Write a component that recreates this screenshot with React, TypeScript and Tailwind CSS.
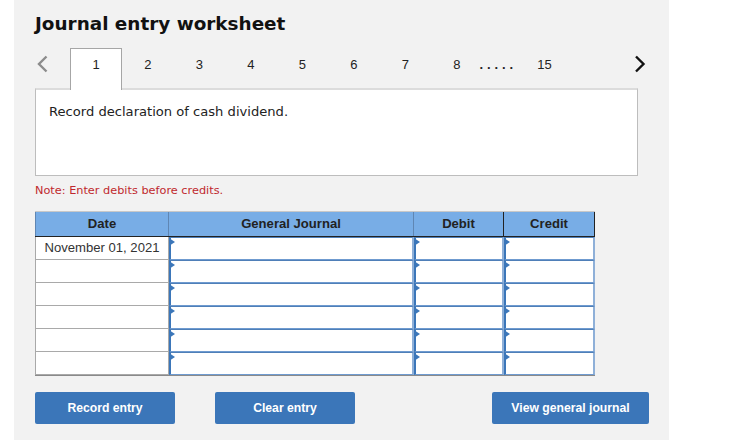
import React from "react";

const tabs = ["2", "3", "4", "5", "6", "7", "8"];
const rows = ["November 01, 2021", "", "", "", "", ""];

const Cell = ({ width }: { width: string }) => (
  <div
    className={`relative h-full border-2 border-y-[1.5px] border-t-[#4f7fb8] border-r-[#8fb0d8] border-b-[#6f9bd0] border-l-[#3b76b9] bg-white ${width}`}
  >
    <span className="absolute left-[-2px] top-0 h-0 w-0 border-y-[4px] border-l-[6px] border-y-transparent border-l-[#3b76b9]" />
  </div>
);

const App = () => {
  return (
    <div className="h-[440px] w-[732px] overflow-hidden bg-white font-['Liberation_Sans',sans-serif]">
      <div className="ml-[14px] h-[440px] w-[655px] bg-[#f2f2f2] px-[21px]">
        <h1 className="pt-[12px] text-[18.4px] leading-[23px] font-bold text-[#111] font-['DejaVu_Sans',sans-serif]">
          Journal entry worksheet
        </h1>

        <div className="mt-[13px] flex h-[42px] items-start">
          <div className="flex h-[32px] w-[35px] items-center pl-[1px]">
            <svg width="12" height="18" viewBox="0 0 12 18" fill="none">
              <path d="M10.5 1.5 3 9l7.5 7.5" stroke="#8c8c8c" strokeWidth="2.4" />
            </svg>
          </div>
          <div className="relative z-10 flex h-[42px] w-[52px] justify-center border border-b-0 border-[#a6a6a6] bg-white pt-[8px] text-[13px] leading-[15px] text-[#222]">
            1
          </div>
          {tabs.map((t) => (
            <div
              key={t}
              className="flex w-[51.5px] justify-center pt-[9px] text-[13px] leading-[15px] text-[#222]"
            >
              {t}
            </div>
          ))}
          <div className="ml-[-3px] w-[39px] pt-[9px] text-[13px] leading-[15px] font-bold tracking-[3.9px] text-[#222]">
            .....
          </div>
          <div className="w-[52px] pt-[9px] text-center text-[13px] leading-[15px] text-[#222]">15</div>
          <div className="ml-[63px] flex h-[32px] items-center">
            <svg width="12" height="18" viewBox="0 0 12 18" fill="none">
              <path d="M2 1.5 9.5 9 2 16.5" stroke="#111" strokeWidth="2.4" />
            </svg>
          </div>
        </div>

        <div className="mt-[-2px] h-[88px] w-[603px] border border-t-2 border-[#bdbdbd] border-t-[#dcdcdc] bg-white px-[13px] pt-[13px] text-[13.1px] leading-[18px] text-[#222] font-['DejaVu_Sans',sans-serif]">
          Record declaration of cash dividend.
        </div>

        <p className="mt-[8px] text-[11.3px] leading-[14px] text-[#c0282d] font-['DejaVu_Sans',sans-serif]">
          Note: Enter debits before credits.
        </p>

        <div className="mt-[13px] w-[560px] border-y border-t-[#c8c8c8] border-b-[#8a8a8a]">
          <div className="flex h-[25px] border-b border-[#222] bg-[#78ade6] text-[13.1px] font-bold text-[#222]">
            <div className="flex w-[134px] items-center justify-center border-x border-[#5f86b3]">Date</div>
            <div className="flex w-[245px] items-center justify-center border-r border-[#5f86b3]">General Journal</div>
            <div className="flex w-[90px] items-center justify-center border-r border-[#222]">Debit</div>
            <div className="flex w-[91px] items-center justify-center border-r border-[#222]">Credit</div>
          </div>
          {rows.map((date, i) => (
            <div key={i} className="flex h-[23px]">
              <div className="flex w-[134px] items-center justify-center border-x border-b border-[#a9a9a9] bg-white text-[13.1px] text-[#333]">
                {date}
              </div>
              <Cell width="w-[245px]" />
              <Cell width="w-[90px]" />
              <Cell width="w-[91px]" />
            </div>
          ))}
        </div>

        <div className="mt-[16px] flex w-[614px] text-[12.2px] font-bold text-white">
          <button className="h-[32px] w-[140px] rounded-[2px] bg-[#3b76b9]">Record entry</button>
          <button className="ml-[40px] h-[32px] w-[140px] rounded-[2px] bg-[#3b76b9]">Clear entry</button>
          <button className="ml-auto h-[32px] w-[157px] rounded-[2px] bg-[#3b76b9]">View general journal</button>
        </div>
      </div>
    </div>
  );
};

export default App;
